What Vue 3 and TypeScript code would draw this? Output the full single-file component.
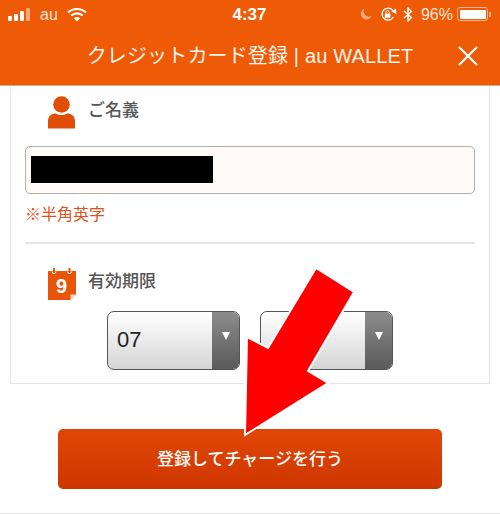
<script setup lang="ts">
const months = ['07', '']
</script>

<template>
  <div class="page">
    <header class="head">
      <div class="status">
        <div class="status-left">
          <span class="bars"><i class="b1"></i><i class="b2"></i><i class="b3"></i><i class="b4"></i></span>
          <span class="carrier">au</span>
          <svg class="wifi" viewBox="0 0 20 15" width="20" height="15">
            <path d="M1 5.6C6 .8 14 .8 19 5.6" fill="none" stroke="#fff" stroke-width="2.1"/>
            <path d="M4.2 8.6C7.4 5.6 12.6 5.6 15.8 8.6" fill="none" stroke="#fff" stroke-width="2.1"/>
            <path d="M10 14.6 6.8 11.3C8.6 9.7 11.4 9.7 13.2 11.3Z" fill="#fff"/>
          </svg>
        </div>
        <div class="clock">4:37</div>
        <div class="status-right">
          <svg class="moon" viewBox="0 0 12 12" width="12" height="12"><path d="M4.4.6A5.6 5.6 0 1 0 11.6 8 5.4 5.4 0 0 1 4.4.6Z" fill="#f7a878"/></svg>
          <svg class="lock" viewBox="0 0 17 15" width="17" height="15">
            <path d="M13.4 10A6 6 0 1 1 13 3.6" fill="none" stroke="#fff" stroke-width="1.4"/>
            <path d="M11.4 4.4 16.4 7 16 1.6Z" fill="#fff"/>
            <rect x="4.8" y="6.6" width="5.6" height="4.2" rx=".5" fill="#fff"/>
            <path d="M5.9 6.6V5.400a1.700 1.700 0 0 1 3.400 0V6.600" fill="none" stroke="#fff"/>
          </svg>
          <svg class="bt" viewBox="0 0 10 15" width="10" height="15">
            <path d="M1 4 8.4 10.6 5 14V1L8.4 4.4 1 11" fill="none" stroke="#fff" stroke-width="1.4"/>
          </svg>
          <span class="pct">96%</span>
          <span class="battery"><span class="level"></span></span>
          <span class="nub"></span>
        </div>
      </div>
      <div class="nav">
        <span class="title">クレジットカード登録 | au WALLET</span>
        <svg class="close" viewBox="0 0 20 20" width="20" height="20">
          <path d="M1 1 19 19M19 1 1 19" stroke="#fff" stroke-width="2.2" fill="none"/>
        </svg>
      </div>
    </header>

    <section class="card">
      <div class="field-head name-head">
        <svg class="icon" viewBox="0 0 27 33" width="27" height="33">
          <circle cx="13.5" cy="8.5" r="8.3" fill="#e04e06"/>
          <path d="M0 32.500V25C0 20 4 17.6 8 17.6 11 19.6 16 19.6 19 17.6 23 17.6 27 20 27 25V32.500Z" fill="#e04e06"/>
        </svg>
        <span class="label">ご名義</span>
      </div>
      <div class="input"><span class="redact"></span></div>
      <p class="note">※半角英字</p>
      <hr class="rule" />
      <div class="field-head date-head">
        <svg class="icon" viewBox="0 0 28 33" width="28" height="33">
          <path d="M0 3H28V26.500L22.500 32H0Z" fill="#e6550a"/>
          <path d="M22.500 32 28 26.500H22.500Z" fill="#fbd9c6"/>
          <path d="M6 0V6M21.500 0V6" stroke="#e6550a" stroke-width="2" />
          <path d="M4 3.500A2 2 0 0 0 8 3.500M19.500 3.500A2 2 0 0 0 23.500 3.500" stroke="#fff" fill="none" stroke-width="1"/>
          <text x="13.500" y="25" class="cal-num">9</text>
        </svg>
        <span class="label date-label">有効期限</span>
      </div>
      <div class="selects">
        <div v-for="(m, i) in months" :key="i" class="select">
          <span class="value">{{ m }}</span>
          <span class="drop"><i class="tri"></i></span>
        </div>
      </div>
    </section>

    <div class="action">
      <button class="submit" type="button">登録してチャージを行う</button>
    </div>
    <div class="foot-rule"></div>

    <svg class="arrow" viewBox="0 0 500 514" width="500" height="514">
      <polygon points="316,268 354,292 308,371 328,383 245,435 247,337 268,348" fill="#ff0000" stroke="#fff" stroke-width="2" stroke-linejoin="miter"/>
    </svg>
  </div>
</template>

<style scoped>
.page {
  position: relative;
  width: 500px;
  height: 514px;
  overflow: hidden;
  background: #fff;
  font-family: "Noto Sans CJK JP", "Liberation Sans", sans-serif;
}
.head {
  height: 85px;
  background: #ee5a05;
  border-bottom: 1px solid #d9a88c;
  color: #fff;
  box-sizing: content-box;
  display: flex;
  flex-direction: column;
}
.status {
  height: 28px;
  display: grid;
  grid-template-columns: 1fr auto 1fr;
  align-items: center;
  padding: 0 9px 0 8px;
  font-family: "Liberation Sans", sans-serif;
}
.status-left { display: flex; align-items: center; }
.bars { display: flex; align-items: flex-end; gap: 2px; height: 13px; margin-right: 10px; }
.bars i { display: block; width: 4px; background: #fff; border-radius: 1px; }
.b1 { height: 5px; }
.b2 { height: 7px; }
.b3 { height: 10px; }
.bars .b4 { height: 13px; background: #f7a878; }
.carrier { font-size: 16px; margin-right: 9px; padding-top: 2px; color: #fde6d8; }
.clock { font-size: 17px; font-weight: 700; padding-top: 1px; }
.status-right { display: flex; align-items: center; justify-content: flex-end; }
.moon { margin-right: 8px; }
.lock { margin-right: 6px; }
.bt { margin-right: 8px; }
.pct { font-size: 16px; margin-right: 4px; padding-top: 1px; color: #fde6d8; }
.battery {
  display: block;
  width: 31px;
  height: 14px;
  box-sizing: border-box;
  border: 1px solid #f7b48c;
  border-radius: 3px;
  padding: 1.5px;
}
.level { display: block; height: 100%; background: #fff; border-radius: 1px; }
.nub { display: block; width: 2px; height: 5px; background: #f7b48c; margin-left: 1px; }
.nav {
  position: relative;
  flex: 1;
  display: flex;
  align-items: center;
  justify-content: center;
  padding-bottom: 4px;
}
.title { font-family: "Liberation Sans", "Noto Sans CJK JP", sans-serif; font-size: 20px; font-weight: 400; letter-spacing: .15px; color: #fff3ea; }
.close { position: absolute; left: 458px; top: 18px; }
.card {
  box-sizing: border-box;
  margin: 0 10px;
  height: 298px;
  border: 1px solid #e6e6e6;
  border-top: 0;
  padding: 0 14px;
}
.field-head { display: flex; align-items: center; }
.name-head { padding: 10px 0 0 23px; }
.date-head { padding: 24px 0 0 23px; }
.label { font-size: 17px; font-weight: 500; color: #555; margin: 0 0 7px 13px; line-height: 24px; }
.date-label { margin: 0 0 9px 12px; }
.input {
  box-sizing: border-box;
  height: 48px;
  width: 450px;
  margin-top: 17px;
  background: #fff9f8;
  border: 1px solid #b5b0b0;
  border-radius: 5px;
  padding: 9px 5px;
}
.redact { display: block; width: 182px; height: 27px; background: #000; }
.note { margin: 7px 0 0; font-size: 16px; line-height: 24px; font-weight: 400; color: #e0521a; }
.rule { margin: 17px 0 0; border: 0; border-top: 2px solid #e4e4e4; width: 450px; }
.cal-num { font: 700 20px "Liberation Sans", sans-serif; fill: #fff; text-anchor: middle; }
.selects { display: flex; gap: 20px; margin: 10px 0 0 82px; }
.select {
  box-sizing: border-box;
  position: relative;
  width: 133px;
  height: 59px;
  display: flex;
  border: 1px solid #555;
  border-radius: 7px;
  overflow: hidden;
  background: linear-gradient(#fff, #d5d5d5);
}
.value {
  flex: 1;
  padding-left: 9px;
  font: 22px/55px "Liberation Sans", sans-serif;
  color: #222;
}
.drop {
  width: 27px;
  background: linear-gradient(#8c8c8c, #5a5a5a);
  display: flex;
  justify-content: center;
  padding-top: 20px;
  box-sizing: border-box;
}
.tri {
  display: block;
  width: 0;
  height: 0;
  border-left: 4.5px solid transparent;
  border-right: 4.5px solid transparent;
  border-top: 8px solid #fff;
}
.action { display: flex; justify-content: center; padding-top: 45px; }
.submit {
  width: 384px;
  height: 60px;
  border: 0;
  border-radius: 5px;
  padding: 0 0 3px;
  background: linear-gradient(#e04706, #cf3600);
  color: #fff;
  font: 500 17px "Noto Sans CJK JP", sans-serif;
}
.foot-rule { margin-top: 24px; height: 2px; background: #e6e6e6; }
.arrow { position: absolute; left: 0; top: 0; pointer-events: none; }
</style>
